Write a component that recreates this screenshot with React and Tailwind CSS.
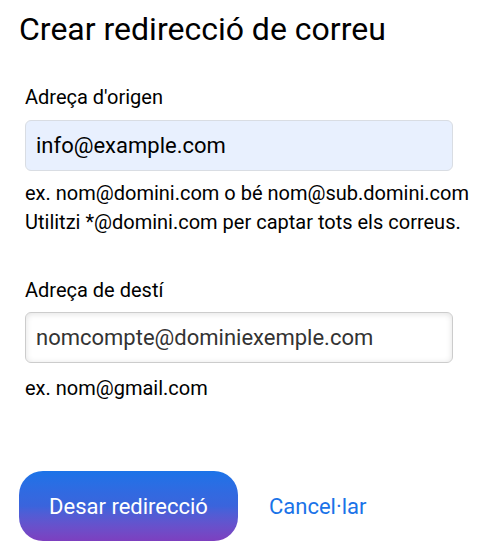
import React from 'react';

const App = () => {
  return (
    <div className="w-[487px] h-[560px] bg-white text-black overflow-hidden" style={{ fontFamily: 'Roboto, "Liberation Sans", sans-serif' }}>
      <div className="pl-[19px] pr-4 pt-[9px]">
        <h1 className="text-[32px] leading-[40px] font-normal">Crear redirecció de correu</h1>

        <div className="pl-[6px] pt-[35px]">
          <label className="block text-[20px] leading-[26px]">Adreça d'origen</label>
          <input
            type="text"
            defaultValue="info@example.com"
            className="mt-[10px] block w-[428px] h-[51px] rounded-[6px] border border-[#d9dde3] bg-[#e8f0fe] px-[10px] text-[22px] text-black outline-none"
          />
          <p className="mt-[8px] text-[20px] leading-[29px]">
            ex. nom@domini.com o bé nom@sub.domini.com
            <br />
            Utilitzi *@domini.com per captar tots els correus.
          </p>

          <label className="mt-[40px] block text-[20px] leading-[26px]">Adreça de destí</label>
          <input
            type="text"
            defaultValue="nomcompte@dominiexemple.com"
            className="mt-[9px] block w-[428px] h-[51px] rounded-[6px] border border-[#cccccc] bg-white px-[10px] text-[22px] text-[#333333] shadow-[inset_0_1px_6px_rgba(0,0,0,0.12)] outline-none"
          />
          <p className="mt-[11px] text-[20px] leading-[29px]">ex. nom@gmail.com</p>
        </div>

        <div className="mt-[68px] flex items-center gap-[31px]">
          <button className="w-[219px] h-[70px] rounded-[24px] bg-gradient-to-b from-[#1a73e8] via-[#3a64dc] to-[#7d3fbf] text-white text-[22px]">
            Desar redirecció
          </button>
          <button className="text-[#1a73e8] text-[22px]">Cancel·lar</button>
        </div>
      </div>
    </div>
  );
};

export default App;
